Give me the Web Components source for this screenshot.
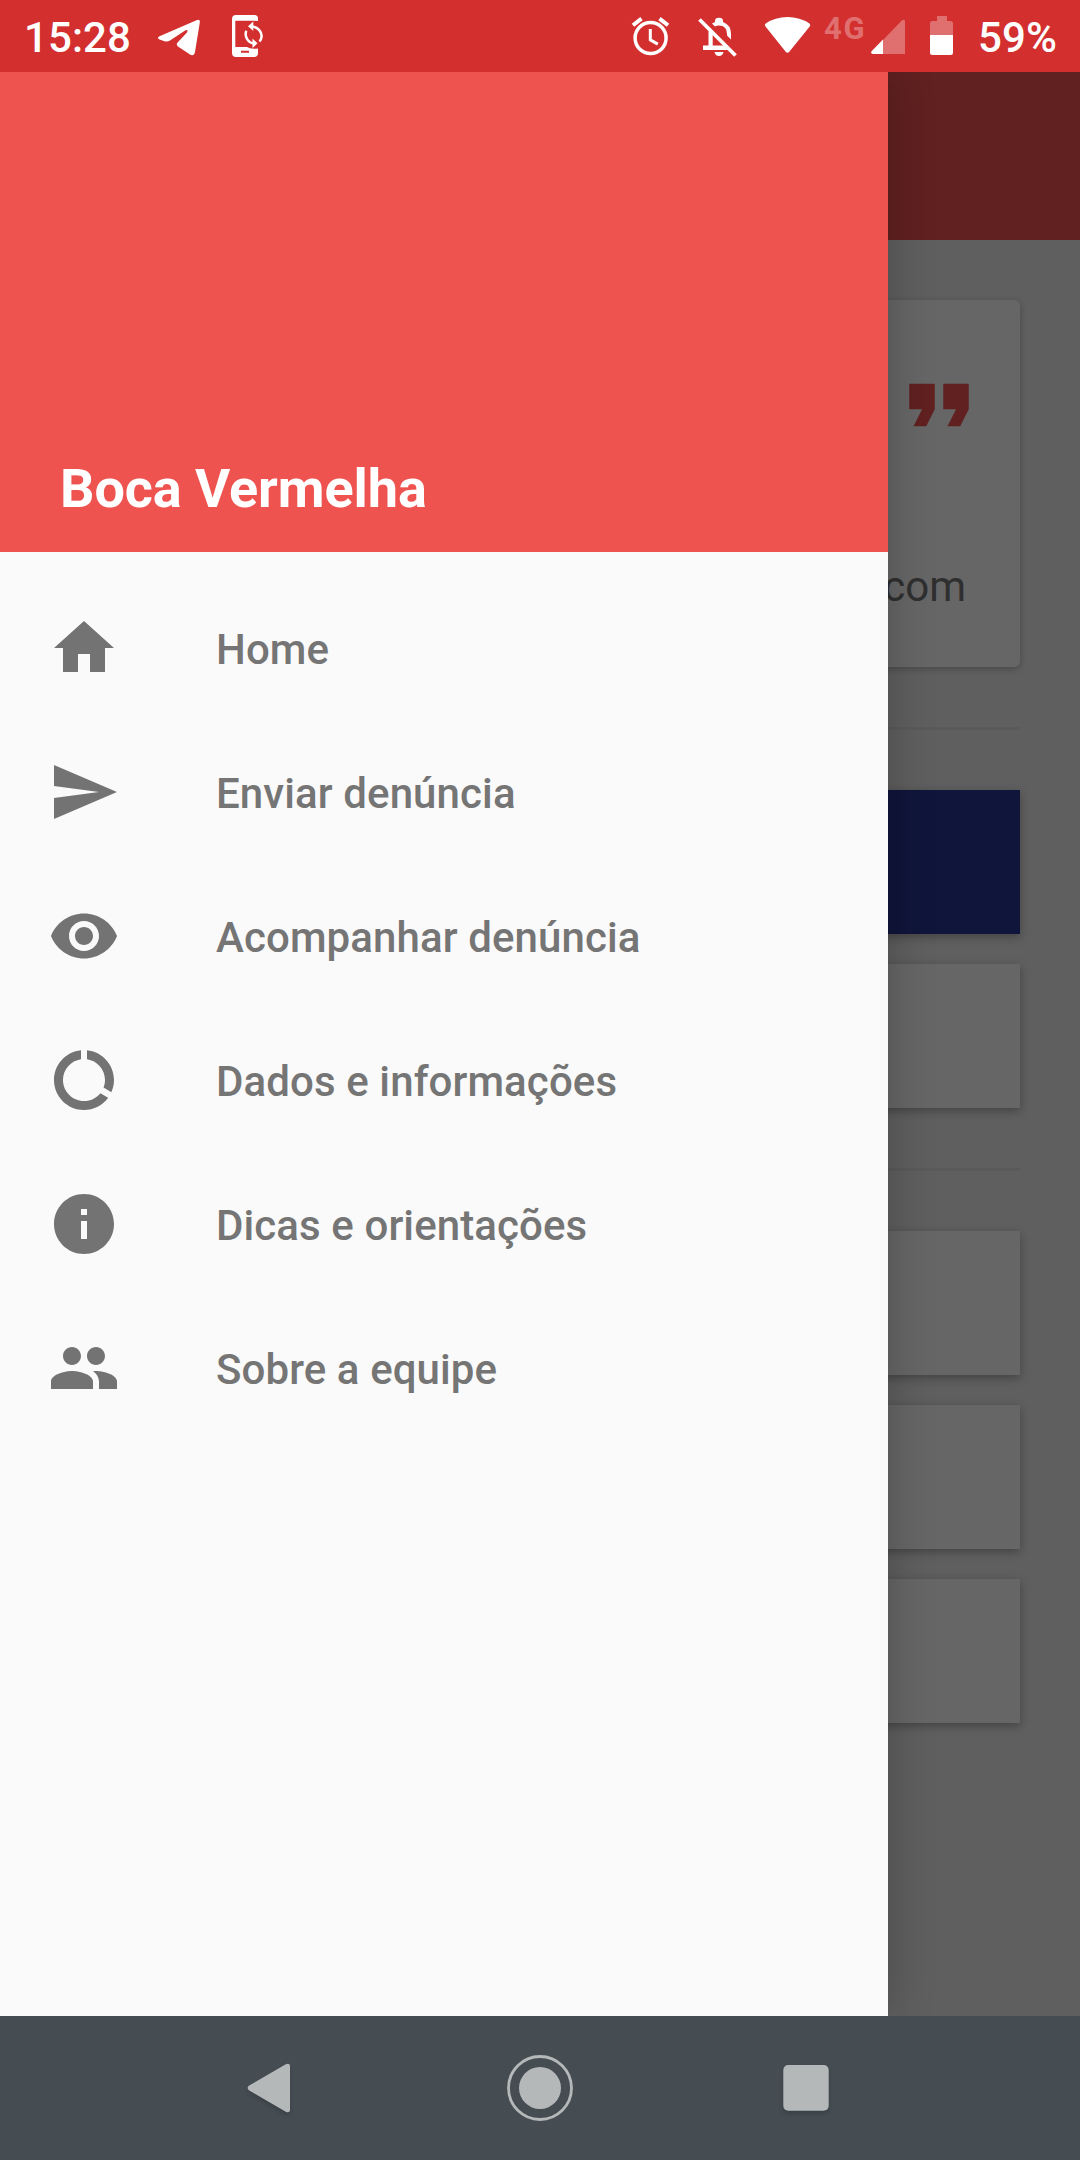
<!DOCTYPE html>
<html lang="pt-BR">
<head>
<meta charset="utf-8">
<title>Boca Vermelha</title>
<style>
html,body{margin:0;padding:0;height:100%;overflow:hidden}
body{font-family:Roboto,"Liberation Sans",sans-serif;background:#fafafa}
</style>
</head>
<body>
<app-shell>
  <status-bar slot="status"></status-bar>
  <home-page slot="page">
    <quote-card>com</quote-card>
    <page-divider></page-divider>
    <action-tile tone="primary"></action-tile>
    <action-tile></action-tile>
    <page-divider></page-divider>
    <action-tile></action-tile>
    <action-tile></action-tile>
    <action-tile></action-tile>
  </home-page>
  <nav-drawer slot="drawer" heading="Boca Vermelha">
    <drawer-item icon="home">Home</drawer-item>
    <drawer-item icon="send">Enviar denúncia</drawer-item>
    <drawer-item icon="eye">Acompanhar denúncia</drawer-item>
    <drawer-item icon="usage">Dados e informações</drawer-item>
    <drawer-item icon="info">Dicas e orientações</drawer-item>
    <drawer-item icon="people">Sobre a equipe</drawer-item>
  </nav-drawer>
  <system-nav slot="nav"></system-nav>
</app-shell>
<script>
const define = (name, render) => customElements.define(name, class extends HTMLElement {
  constructor() { super(); this.attachShadow({ mode: "open" }); }
  connectedCallback() { this.shadowRoot.innerHTML = render(this); }
});

const ICONS = {
  home: "M10 20v-6h4v6h5v-8h3L12 3 2 12h3v8z",
  send: "M2.01 21L23 12 2.01 3 2 10l15 2-15 2z",
  eye: "M12 4.5C7 4.5 2.73 7.61 1 12c1.73 4.39 6 7.5 11 7.5s9.27-3.11 11-7.5c-1.73-4.39-6-7.5-11-7.5zM12 17c-2.76 0-5-2.24-5-5s2.24-5 5-5 5 2.24 5 5-2.24 5-5 5zm0-8c-1.66 0-3 1.34-3 3s1.34 3 3 3 3-1.34 3-3-1.34-3-3-3z",
  usage: "M13 2.05v3.03c3.39.49 6 3.39 6 6.92 0 .9-.18 1.75-.48 2.54l2.6 1.53c.56-1.24.88-2.62.88-4.07 0-5.18-3.95-9.45-9-9.95zM12 19c-3.87 0-7-3.13-7-7 0-3.53 2.61-6.43 6-6.92V2.05c-5.06.5-9 4.76-9 9.95 0 5.52 4.47 10 9.99 10 3.31 0 6.24-1.61 8.06-4.09l-2.6-1.53C16.17 17.98 14.21 19 12 19z",
  info: "M12 2C6.48 2 2 6.48 2 12s4.48 10 10 10 10-4.48 10-10S17.52 2 12 2zm1 15h-2v-6h2v6zm0-8h-2V7h2v2z",
  people: "M16 11c1.66 0 2.99-1.34 2.99-3S17.66 5 16 5c-1.66 0-3 1.34-3 3s1.34 3 3 3zm-8 0c1.66 0 2.99-1.34 2.99-3S9.66 5 8 5C6.34 5 5 6.34 5 8s1.34 3 3 3zm0 2c-2.33 0-7 1.17-7 3.5V19h14v-2.5c0-2.33-4.67-3.5-7-3.5zm8 0c-.29 0-.62.02-.97.05 1.16.84 1.97 1.97 1.97 3.45V19h6v-2.5c0-2.33-4.67-3.5-7-3.5z"
};

define("app-shell", () => `
<style>
:host{display:flex;flex-direction:column;width:1080px;height:2160px;overflow:hidden}
.stage{flex:1;position:relative;overflow:hidden;display:flex}
.scrim{position:absolute;inset:0;background:rgba(0,0,0,.6)}
</style>
<slot name="status"></slot>
<div class="stage"><slot name="page"></slot><div class="scrim"></div><slot name="drawer"></slot></div>
<slot name="nav"></slot>`);

define("status-bar", () => `
<style>
:host{display:flex;justify-content:space-between;height:72px;background:#d32f2f;color:#fff;fill:#fff;
 font-size:42px;font-weight:500;line-height:50px}
.side{display:flex;align-items:flex-start}
.left{padding-left:24px}.right{padding-right:24px}
svg{display:block;flex:none;height:72px}
.t{padding-top:13px;white-space:nowrap;letter-spacing:.1px}
.net{font-size:31px;line-height:36px;font-weight:700;padding-top:11px;color:#e07070;letter-spacing:1.6px}
</style>
<div class="side left">
 <span class="t">15:28</span>
 <svg style="margin-left:25px" width="46" viewBox="156 0 46 72"><path d="M159.500 36.300L196.500 20.200Q200.300 18.800 199.800 22.500L195 52Q194 56.600 190 54.600L178 46.500Q175.600 44.500 177.800 42.200L187 32.500Q188.500 29.500 185.500 30.200L170 40.400Q167.500 42.100 164.500 41.200L159.500 39.600Q156.500 38 159.500 36.300z"/></svg>
 <svg style="margin-left:27px" width="36" viewBox="229 0 36 72"><path fill-rule="evenodd" d="M236 15h18.500q3.500 0 3.500 3.500v2.500l-4-.200H235.300V47H247q3 2.300 11 1.500v4.500q0 4-4 4h-18q-4 0-4-4V19q0-4 4-4zM241 50.700v2h8v-2z"/>
  <g fill="none" stroke="#fff" stroke-width="2.500"><path d="M251 26.500c6.800 0 11.200 5.300 10.500 10.500a8 8 0 0 1-2 4.500M246.300 30.700a9.500 9.500 0 0 0 8 12.800"/></g>
  <path d="M248 26.300l5.300-4.700v9.400zM257.500 43.300l-5 4.800v-9.500z"/></svg>
</div>
<div class="side right">
 <svg width="40" viewBox="631 0 40 72"><g fill="none" stroke="#fff"><circle cx="650.600" cy="38" r="15.500" stroke-width="3.500"/><path stroke-width="3" d="M650.300 29v10.800l7.500 4.300"/><path stroke-width="4" d="M633 25.300l8.500-6.700M668 25.300l-8.500-6.700"/></g></svg>
 <svg style="margin-left:26px" width="42" viewBox="697 0 42 72"><path fill-rule="evenodd" d="M703 45.500h5.500V33q0-3 1-5.500l3.200 3.200V45.500H724l4.500 4.500H703zM712 23.500l3-1.500v-1q0-3.300 4-3.300t4 3.300v1q8 3 8 12v5.500l-4-4V34q0-8.500-8-8.500-2.500 0-4 1zM714.500 52h9q-.8 4-4.500 4t-4.500-4z"/><path d="M699.500 19.500L735.500 55.500" stroke="#fff" stroke-width="3.800"/></svg>
 <svg style="margin-left:24px" width="50" viewBox="763 0 50 72"><path d="M765.500 26.500Q764 25 765.700 23.500Q775 17 787.500 17T809.500 23.500Q811 25 809.700 26.500L789.300 51.700Q787.500 54 785.700 51.700z"/></svg>
 <span class="net" style="margin-left:11px;width:46px">4G</span>
 <svg width="36" viewBox="870 0 36 72"><path fill="#e07070" d="M883 40L901.500 20.700Q905 18.300 905 21.500V54H883z"/><path d="M883 39.500V54H873Q869.800 53.200 872 50.800z"/></svg>
 <svg style="margin-left:24px" width="24" viewBox="930 0 24 72"><path fill="#e07070" d="M930 35V23.500Q930 21 932.500 21H937V16h10v5h3.500Q953 21 953 23.500V35z"/><path d="M930 35h23v17.500q0 2.500-2.500 2.500h-18q-2.500 0-2.500-2.500z"/></svg>
 <span class="t" style="margin-left:24px;margin-right:-1px">59%</span>
</div>`);

define("home-page", () => `
<style>
:host{display:flex;flex-direction:column;flex:1;background:#ededed}
.bar{height:168px;flex:none;background:#ef5350}
.body{display:flex;flex-direction:column;gap:30px;padding:60px}
</style>
<div class="bar"></div><div class="body"><slot></slot></div>`);

define("quote-card", () => `
<style>
:host{display:flex;flex-direction:column;align-items:flex-end;box-sizing:border-box;height:367px;background:#fff;border-radius:6px;
 padding:54px 30px 0;box-shadow:0 2px 7px rgba(0,0,0,.24)}
svg{display:block;width:102px;height:102px;fill:#ef5350}
p{margin:106px 24px 0 0;font-size:42px;line-height:50px;color:#757575}
</style>
<svg viewBox="0 0 24 24"><path d="M6 17h3l2-4V7H5v6h3zm8 0h3l2-4V7h-6v6h3z"/></svg><p><slot></slot></p>`);

define("page-divider", () => `<style>:host{display:block;height:3px;margin:30px 0;background:#e0e0e0}</style>`);

define("action-tile", el => `
<style>:host{display:block;height:144px;background:${el.getAttribute("tone") === "primary" ? "#283593" : "#fff"};
box-shadow:0 3px 9px rgba(0,0,0,.3)}</style>`);

define("nav-drawer", el => `
<style>
:host{position:absolute;left:0;top:0;bottom:0;width:888px;display:flex;flex-direction:column;background:#fafafa;
 box-shadow:0 0 44px rgba(0,0,0,.23)}
header{box-sizing:border-box;height:480px;flex:none;display:flex;align-items:flex-end;background:#ef5350;color:#fff;padding:0 60px 31px;
 font-size:54px;line-height:64px;font-weight:700;letter-spacing:-.08px}
nav{display:flex;flex-direction:column;padding-top:24px}
</style>
<header>${el.getAttribute("heading")}</header><nav><slot></slot></nav>`);

define("drawer-item", el => `
<style>
:host{display:flex;align-items:center;gap:96px;height:144px;padding-left:48px;color:#757575;font-size:42px;line-height:50px;font-weight:500;letter-spacing:.1px}
svg{width:72px;height:72px;fill:#737373;flex:none}
span{padding-top:3px}
</style>
<svg viewBox="0 0 24 24"><path d="${ICONS[el.getAttribute("icon")]}"/></svg><span><slot></slot></span>`);

define("system-nav", () => `
<style>
:host{display:flex;align-items:center;justify-content:center;gap:195px;height:144px;background:#454d53;position:relative}
svg{display:block;width:72px;height:72px;fill:#b4b8b9;filter:drop-shadow(0 3px 2px rgba(0,0,0,.16))}
</style>
<svg viewBox="237 2052 72 72"><path d="M248.800 2085.800L285.800 2064.300Q290 2062.500 290 2066.500V2109.500Q290 2113.500 285.800 2111.700L248.800 2090.200Q246.500 2088 248.800 2085.800z"/></svg>
<svg viewBox="0 0 72 72" style="filter:none"><circle cx="36" cy="36" r="21"/><circle cx="36" cy="36" r="31.500" fill="none" stroke="#b4b8b9" stroke-width="2.800"/></svg>
<svg viewBox="771 2052 72 72"><rect x="783.300" y="2065" width="45.400" height="45.700" rx="5"/></svg>`);
</script>
</body>
</html>
